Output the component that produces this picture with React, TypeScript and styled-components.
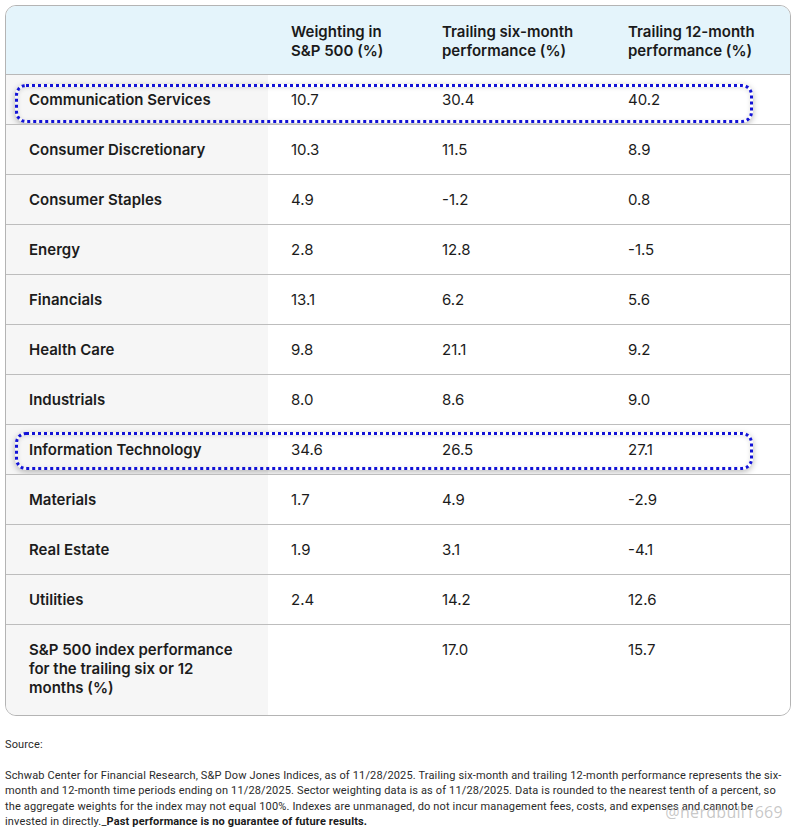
import { FC } from "react";
import styled, { createGlobalStyle } from "styled-components";

const GlobalStyle = createGlobalStyle`
  html, body {
    margin: 0;
    padding: 0;
    background: #ffffff;
  }
  body {
    font-family: Roboto, "Liberation Sans", Arial, sans-serif;
    color: #1c1c1c;
  }
`;

const Page = styled.div`
  position: relative;
  width: 797px;
  height: 836px;
  padding: 5px 6px 0 5px;
  box-sizing: border-box;
  overflow: hidden;
`;

const Card = styled.div`
  border: 1px solid #b4b4b4;
  border-radius: 11px;
  overflow: hidden;
  width: 786px;
  box-sizing: border-box;
  font-family: Inter, "Noto Sans", sans-serif;
`;

const Grid = styled.div`
  display: grid;
  grid-template-columns: 262px 151px 186px 1fr;
`;

const HeaderRow = styled.div`
  display: contents;
`;

const HeadCell = styled.div`
  background: #e4f4fb;
  padding: 16px 23px 16px 23px;
  font-size: 15px;
  line-height: 19px;
  font-weight: 600;
  color: #1a1a1a;
  border-bottom: 1px solid #b8b8b8;
  height: 36px;
  display: flex;
  align-items: flex-start;
`;

const Row = styled.div`
  position: relative;
  grid-column: 1 / -1;
  display: grid;
  grid-template-columns: subgrid;
  & + & {
    border-top: 1px solid #bdbdbd;
  }
`;

const Cell = styled.div<{ $label?: boolean; $tall?: boolean }>`
  padding: ${(p) => (p.$tall ? "15px 30px 18px 23px" : "15px 23px")};
  font-size: 15px;
  line-height: 19px;
  font-weight: ${(p) => (p.$label ? 600 : 400)};
  background: ${(p) => (p.$label ? "#f6f6f6" : "#ffffff")};
  color: #1c1c1c;
`;

const Highlight = styled.div<{ $top: number; $bottom: number }>`
  position: absolute;
  left: 9px;
  right: 37px;
  top: ${(p) => p.$top}px;
  bottom: ${(p) => p.$bottom}px;
  border: 3px dotted #1212d6;
  border-radius: 11px;
  box-shadow: 0 2px 6px rgba(0, 0, 0, 0.28), inset 0 1px 4px rgba(0, 0, 0, 0.12);
  pointer-events: none;
`;

const Notes = styled.div`
  padding-top: 21px;
  font-size: 11px;
  line-height: 15.6px;
  color: #2a2a2a;
`;

const Note = styled.p`
  margin: 0 0 15px 0;
  letter-spacing: 0.15px;
  white-space: nowrap;
  b {
    font-weight: 700;
    color: #1a1a1a;
  }
`;

const Watermark = styled.div`
  position: absolute;
  right: 14px;
  bottom: 13px;
  font-size: 16px;
  color: rgba(175, 175, 175, 0.7);
  letter-spacing: 0.3px;
  font-family: "Open Sans", Roboto, sans-serif;
`;

type Sector = { name: string; weight: string; six: string; twelve: string; mark?: [number, number] };

const sectors: Sector[] = [
  { name: "Communication Services", weight: "10.7", six: "30.4", twelve: "40.2", mark: [9, 1] },
  { name: "Consumer Discretionary", weight: "10.3", six: "11.5", twelve: "8.9" },
  { name: "Consumer Staples", weight: "4.9", six: "-1.2", twelve: "0.8" },
  { name: "Energy", weight: "2.8", six: "12.8", twelve: "-1.5" },
  { name: "Financials", weight: "13.1", six: "6.2", twelve: "5.6" },
  { name: "Health Care", weight: "9.8", six: "21.1", twelve: "9.2" },
  { name: "Industrials", weight: "8.0", six: "8.6", twelve: "9.0" },
  { name: "Information Technology", weight: "34.6", six: "26.5", twelve: "27.1", mark: [7, 4] },
  { name: "Materials", weight: "1.7", six: "4.9", twelve: "-2.9" },
  { name: "Real Estate", weight: "1.9", six: "3.1", twelve: "-4.1" },
  { name: "Utilities", weight: "2.4", six: "14.2", twelve: "12.6" },
];

const App: FC = () => {
  return (
    <>
      <GlobalStyle />
      <Page>
        <Card>
          <Grid>
            <HeaderRow>
              <HeadCell />
              <HeadCell>Weighting in<br />S&amp;P 500 (%)</HeadCell>
              <HeadCell>Trailing six-month<br />performance (%)</HeadCell>
              <HeadCell>Trailing 12-month<br />performance (%)</HeadCell>
            </HeaderRow>
            {sectors.map((s) => (
              <Row key={s.name}>
                <Cell $label>{s.name}</Cell>
                <Cell>{s.weight}</Cell>
                <Cell>{s.six}</Cell>
                <Cell>{s.twelve}</Cell>
                {s.mark && <Highlight $top={s.mark[0]} $bottom={s.mark[1]} />}
              </Row>
            ))}
            <Row>
              <Cell $label $tall>S&amp;P 500 index performance<br />for the trailing six or 12<br />months (%)</Cell>
              <Cell $tall />
              <Cell $tall>17.0</Cell>
              <Cell $tall>15.7</Cell>
            </Row>
          </Grid>
        </Card>
        <Notes>
          <Note>Source:</Note>
          <Note>
            Schwab Center for Financial Research, S&amp;P Dow Jones Indices, as of 11/28/2025. Trailing six-month and
            trailing 12-month performance represents the six-<br />month and 12-month time periods ending on 11/28/2025.
            Sector weighting data is as of 11/28/2025. Data is rounded to the nearest tenth of a percent, so<br />the
            aggregate weights for the index may not equal 100%. Indexes are unmanaged, do not incur management fees,
            costs, and expenses and cannot be<br />invested in directly._<b>Past performance is no guarantee of future results.</b>
          </Note>
        </Notes>
        <Watermark>@nerdbull1669</Watermark>
      </Page>
    </>
  );
};

export default App;
